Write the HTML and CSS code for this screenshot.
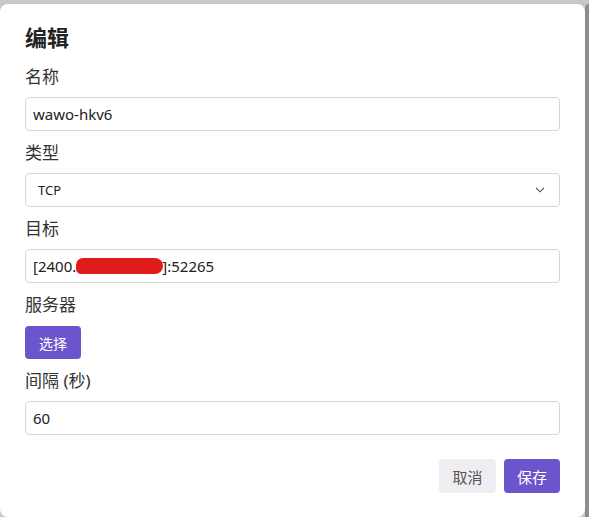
FILE: index.html
```html
<!DOCTYPE html>
<html lang="zh">
<head>
<meta charset="utf-8">
<link rel="stylesheet" href="styles.css">
</head>
<body>
<div class="page">
  <div class="dialog">
    <h2 class="title">编辑</h2>
    <div class="field">
      <label class="label">名称</label>
      <div class="input">wawo-hkv6</div>
    </div>
    <div class="field">
      <label class="label">类型</label>
      <div class="input select">
        <span class="select-text">TCP</span>
        <svg class="chev" width="10" height="6" viewBox="0 0 10 6"><path d="M1 1 L5 4.8 L9 1" fill="none" stroke="#555" stroke-width="1.1"/></svg>
      </div>
    </div>
    <div class="field">
      <label class="label">目标</label>
      <div class="input">[2400.<span class="blot"></span>]:52265</div>
    </div>
    <div class="field">
      <label class="label">服务器</label>
      <div class="btn-row"><button class="btn primary small">选择</button></div>
    </div>
    <div class="field">
      <label class="label">间隔 (秒)</label>
      <div class="input">60</div>
    </div>
    <div class="footer">
      <button class="btn secondary">取消</button>
      <button class="btn primary">保存</button>
    </div>
  </div>
  <div class="side"></div>
</div>
</body>
</html>
```

FILE: styles.css
```css
html, body {
  margin: 0;
  padding: 0;
  background: #c8c8c8;
  font-family: "Noto Sans", "Noto Sans CJK SC", sans-serif;
}
.page {
  display: flex;
  padding-top: 4px;
  height: 513px;
  overflow: hidden;
}
.dialog {
  width: 585px;
  height: 513px;
  flex: none;
  box-sizing: border-box;
  background: #fff;
  border-radius: 8px;
  padding: 18px 25px 0 25px;
}
.side {
  flex: 1;
  background: #8d8d8d;
  border-top-left-radius: 6px;
}
.title {
  margin: 0 0 13px 0;
  font-size: 22px;
  line-height: 30px;
  font-weight: 700;
  color: #222;
}
.field {
  margin-bottom: 10px;
}
.label {
  display: block;
  font-size: 17px;
  line-height: 24px;
  color: #333;
  margin-bottom: 8px;
}
.input {
  box-sizing: border-box;
  height: 34px;
  border: 1px solid #d8d6de;
  border-radius: 4px;
  padding: 0 7px;
  display: flex;
  align-items: center;
  font-size: 15px;
  color: #222;
  white-space: nowrap;
}
.select {
  justify-content: space-between;
  padding: 0 14px 0 12px;
}
.select-text {
  font-size: 13px;
}
.chev {
  display: block;
}
.blot {
  display: inline-block;
  width: 87px;
  height: 16px;
  border-radius: 8px 9px 9px 6px;
  background: #e01b1b;
  margin: 0 -1px 0 0;
}
.btn-row {
  padding-top: 1px;
}
.btn {
  box-sizing: border-box;
  height: 34px;
  border: none;
  border-radius: 4px;
  font-family: "Noto Sans", "Noto Sans CJK SC", sans-serif;
  font-size: 15px;
  padding: 0;
  cursor: pointer;
}
.primary {
  background: #6c55cc;
  color: #fff;
  width: 56px;
}
.small {
  height: 33px;
  font-size: 14px;
}
.secondary {
  background: #efedf1;
  color: #555;
  width: 57px;
}
.footer {
  display: flex;
  justify-content: flex-end;
  gap: 8px;
  margin-top: 24px;
}
```
